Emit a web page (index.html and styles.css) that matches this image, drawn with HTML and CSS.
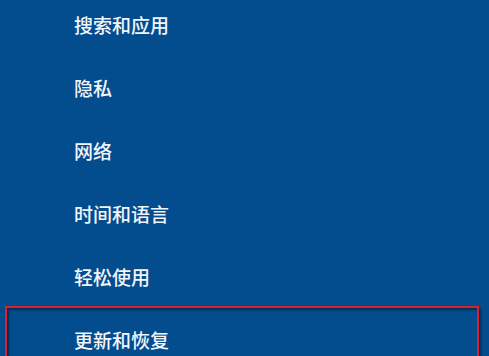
FILE: index.html
```
<!DOCTYPE html>
<html lang="zh-CN">
<head>
<meta charset="utf-8">
<link rel="stylesheet" href="styles.css">
</head>
<body>
<ul class="menu">
  <li class="item">搜索和应用</li>
  <li class="item">隐私</li>
  <li class="item">网络</li>
  <li class="item">时间和语言</li>
  <li class="item">轻松使用</li>
  <li class="item selected">更新和恢复</li>
</ul>
</body>
</html>
```
FILE: styles.css
```
html, body {
  margin: 0;
  padding: 0;
  width: 489px;
  height: 356px;
  overflow: hidden;
  background: #034c8e;
}
.menu {
  list-style: none;
  margin: -7px 0 0 0;
  padding: 0;
  display: flex;
  flex-direction: column;
}
.item {
  box-sizing: border-box;
  height: 63px;
  margin: 0 10px 0 5px;
  padding-left: 67px;
  border: 2px solid transparent;
  display: flex;
  align-items: center;
  color: #f2f5f9;
  font-family: "Noto Sans CJK SC", "Microsoft YaHei", sans-serif;
  font-size: 19px;
  font-weight: 500;
}
.selected {
  margin-top: -2px;
  height: 65px;
  padding-top: 2px;
  border: 2px solid #dc1f2c;
  box-shadow: inset 2px 2px 2px rgba(0, 0, 0, 0.4), 2px 2px 2px rgba(0, 0, 0, 0.4);
}
```
